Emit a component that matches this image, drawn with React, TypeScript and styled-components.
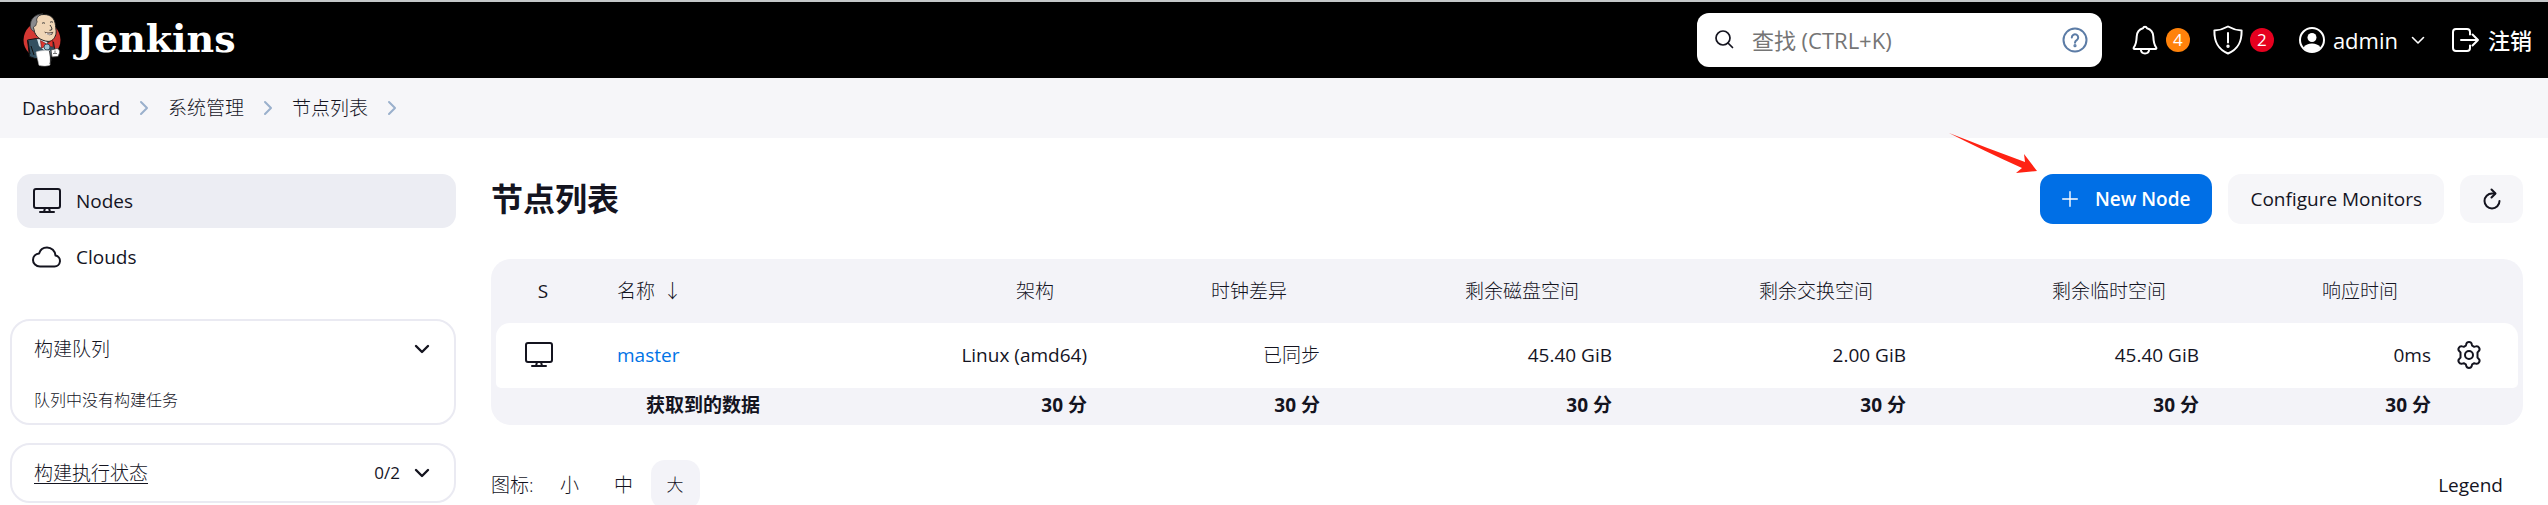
import React from "react";
import styled, { createGlobalStyle } from "styled-components";

const Global = createGlobalStyle`
  *, *::before, *::after { box-sizing: border-box; }
  body {
    margin: 0;
    background: #fff;
    color: #14141f;
    font-family: "Open Sans", "Noto Sans CJK SC", sans-serif;
    font-size: 19px;
    line-height: 28px;
  }
  a { color: inherit; text-decoration: none; }
  button { font: inherit; color: inherit; border: 0; background: none; padding: 0; cursor: pointer; }
  svg { display: block; flex: none; }
`;

/* ---------- icons ---------- */

const Line = styled.svg.attrs({ fill: "none", "aria-hidden": true })<{ $color?: string }>`
  stroke: ${p => p.$color ?? "currentColor"};
  stroke-linecap: round;
  stroke-linejoin: round;
`;

const MonitorIcon = () => (
  <Line width="30" height="30" viewBox="0 0 30 30" strokeWidth="2">
    <rect x="2" y="3" width="26" height="19" rx="2" />
    <path d="M13 22l-1 4M17 22l1 4M8 26h14" />
  </Line>
);

const CloudIcon = () => (
  <Line width="30" height="30" viewBox="0 0 30 30" strokeWidth="2">
    <path d="M8 24.500h14.500a5.500 5.500 0 0 0 1-10.900C23.200 8.800 19.500 5.500 15 5.500c-3.900 0-6.900 2.400-7.900 5.900C3.700 11.800 1 14.500 1 17.900 1 21.600 4 24.500 8 24.500z" />
  </Line>
);

const CrumbChevron = () => (
  <Line width="10" height="16" viewBox="0 0 10 16" strokeWidth="2" $color="#9ab0cc">
    <path d="M2 2l6 6-6 6" />
  </Line>
);

const ChevronDown = ({ thin }: { thin?: boolean }) => (
  <Line width="16" height="16" viewBox="0 0 16 16" strokeWidth={thin ? 1.6 : 2.4}>
    {thin ? <path d="M2.500 5.500L8 11l5.500-5.500" /> : <path d="M2 5l6 6 6-6" />}
  </Line>
);

const SearchIcon = () => (
  <Line width="20" height="20" viewBox="0 0 20 20" strokeWidth="1.700">
    <circle cx="9" cy="8" r="7" />
    <path d="M14 13l4.500 4.500" />
  </Line>
);

const HelpIcon = () => (
  <Line width="26" height="26" viewBox="0 0 26 26" strokeWidth="2" $color="#5c7ca6">
    <circle cx="13" cy="13" r="11.500" />
    <path d="M9.800 10.600a3.200 3.200 0 1 1 5 2.600c-1.200.8-1.800 1.300-1.800 2.500" />
    <circle cx="13" cy="18.700" r=".6" fill="#5c7ca6" />
  </Line>
);

const BellIcon = () => (
  <Line width="26" height="30" viewBox="0 0 26 30" strokeWidth="2">
    <path d="M2.500 24c-.8 0-1.200-.8-.7-1.500C4 19.500 4.500 17 4.700 11.500 5 6.500 8.300 4 11 3.300c.3-1 1-1.600 2-1.600s1.700.6 2 1.600c2.700.7 6 3.200 6.300 8.200.2 5.500.7 8 2.900 11 .5.700.1 1.500-.7 1.500z" />
    <path d="M8.800 24.500c.3 2.500 2 4 4.200 4s3.900-1.500 4.200-4" />
  </Line>
);

const ShieldIcon = () => (
  <Line width="30" height="30" viewBox="0 0 30 30" strokeWidth="2">
    <path d="M15 1.500C19.500 4 24 5.300 28.600 5.600 28.800 16 26 24 15 28.500 4 24 1.200 16 1.400 5.600 6 5.300 10.500 4 15 1.500z" />
    <path d="M15 8v9.500" />
    <circle cx="15" cy="21.300" r=".7" fill="currentColor" />
  </Line>
);

const UserIcon = () => (
  <svg width="26" height="26" viewBox="0 0 26 26" aria-hidden="true">
    <circle cx="13" cy="13" r="12" fill="none" stroke="#fff" strokeWidth="2" />
    <circle cx="13" cy="10.500" r="4.500" fill="#fff" />
    <path d="M4.500 20.500c2-3 5-4 8.500-4s6.500 1 8.500 4A12 12 0 0 1 13 25a12 12 0 0 1-8.500-4.500z" fill="#fff" />
  </svg>
);

const LogoutIcon = () => (
  <Line width="28" height="24" viewBox="0 0 28 24" strokeWidth="2">
    <path d="M18 6.500V4a3 3 0 0 0-3-3H4a3 3 0 0 0-3 3v16a3 3 0 0 0 3 3h11a3 3 0 0 0 3-3v-2.500" />
    <path d="M9 12h17M20.500 6.500L26 12l-5.500 5.500" />
  </Line>
);

const PlusIcon = () => (
  <Line width="16" height="16" viewBox="0 0 16 16" strokeWidth="1.400">
    <path d="M8 .7v14.600M.7 8h14.600" />
  </Line>
);

const RefreshIcon = () => (
  <Line width="20" height="22" viewBox="0 0 20 22" strokeWidth="2">
    <path d="M13 5.500h-3A7.500 7.500 0 1 0 17.500 13" />
    <path d="M9.500 1.500l4 4-4 4" />
  </Line>
);

const GearIcon = () => (
  <Line width="28" height="28" viewBox="0 0 28 28" strokeWidth="2">
    <path d="M11.200 3.200C11.500 1.900 12.500 1 14 1s2.500.9 2.800 2.200l.4 1.500 2 1.100 1.500-.4c1.300-.4 2.700.1 3.400 1.300s.5 2.700-.5 3.600L22.500 11.400v5.200l1.100 1.100c1 .9 1.200 2.400.5 3.600s-2.100 1.700-3.400 1.300l-1.500-.4-2 1.100-.4 1.500C16.500 26.100 15.500 27 14 27s-2.500-.9-2.800-2.200l-.4-1.500-2-1.100-1.500.4c-1.300.4-2.700-.1-3.400-1.300s-.5-2.700.5-3.600l1.100-1.100v-5.200l-1.100-1.100c-1-.9-1.200-2.400-.5-3.600s2.100-1.700 3.400-1.300l1.500.4 2-1.100z" />
    <circle cx="14" cy="14" r="4" />
  </Line>
);

const ButlerLogo = () => (
  <svg width="40" height="56" viewBox="0 0 40 56" aria-hidden="true">
    <circle cx="20" cy="28" r="18.500" fill="#d33833" />
    <path d="M5.500 28l9-1.500 17 3.500 1 7-4 9.500H13l-5.500-2z" fill="#335061" stroke="#111" strokeWidth="1" />
    <path d="M9 34l3 9M6 29l2 13" stroke="#111" fill="none" />
    <path d="M15 27l9 1 4 8-5 3-6-5z" fill="#dce8ee" />
    <path d="M11 15C11 6 15 2.500 22 2.500c7 0 11 4 11.500 11 .5 5 1.500 8-1 12-2 3.500-5 4.500-9 3.500-7-1.500-11-6-12.500-14z" fill="#f0d6b7" stroke="#222" strokeWidth="1" />
    <path d="M8.500 12C9 6 14 2 21 1.800 17 3 15 5 14.500 8c1.500 2-.5 3-.5 5 0 1.500-2 .5-2.500 2.500l1 4c-3.500-1-4.500-4-4-7.500z" fill="#8a8a8e" stroke="#333" strokeWidth=".8" />
    <path d="M20 11.500c1-1 2-1 3 0M28 10.500c1-1 2-1 3 0M28 13c1.500 2.500 2.500 3.500 1.500 5l-2 .3" stroke="#333" fill="none" />
    <path d="M22 19.500c2.500 1.300 5 1.500 9.500.3l-1.500 3c-3 .9-5 .3-8-3.300z" fill="#5b4a42" />
    <path d="M24 21.500c2 .8 3.500.8 5.500.1" stroke="#fff" fill="none" />
    <path d="M18.500 28.500l6 3.500 6-4 .5 7-6-1.500-5.500 2.500z" fill="#e0342f" stroke="#7c1714" strokeWidth=".7" />
    <circle cx="25" cy="35" r="3" fill="#9dc2d3" stroke="#335061" />
    <path d="M29 38l6-1.500c2 .5 3 2 2.500 4.500L36 44.500l-6 .5z" fill="#fff" stroke="#444" strokeWidth=".8" />
    <path d="M31 41.500h4M33 38.500v3" stroke="#777" />
    <path d="M14 40c4-1.500 9-1.800 14-1.200V53c-3 1.300-8 1.300-11 .3z" fill="#fff" stroke="#bbb" strokeWidth=".6" />
    <path d="M27.500 39l1.500 9-1 4" stroke="#333" fill="none" />
  </svg>
);

/* ---------- top bar ---------- */

const TopBar = styled.header`
  display: flex;
  align-items: center;
  height: 78px;
  padding: 0 16px 0 22px;
  background: #000;
  color: #fff;
  border-top: 2px solid #c4c7c9;
`;

const Brand = styled.a`
  display: flex;
  align-items: center;
  gap: 14px;
  margin-right: auto;
  font-family: "DejaVu Serif", serif;
  font-weight: 700;
  font-size: 38px;
  line-height: 40px;
  span { margin-bottom: 3px; }
`;

const SearchBox = styled.label`
  display: flex;
  align-items: center;
  width: 405px;
  height: 54px;
  padding: 0 14px 0 17px;
  border-radius: 12px;
  background: #fff;
  color: #14141f;
`;

const SearchInput = styled.input`
  flex: 1;
  min-width: 0;
  margin-left: 18px;
  padding: 0;
  border: 0;
  outline: 0;
  background: none;
  font: inherit;
  font-size: 22px;
  &::placeholder { color: #757575; opacity: 1; }
`;

const TopLink = styled.a<{ $left: number; $gap?: number }>`
  display: flex;
  align-items: center;
  gap: ${p => p.$gap ?? 8}px;
  margin-left: ${p => p.$left}px;
  font-size: 22px;
  font-weight: 500;
  white-space: nowrap;
`;

const Badge = styled.span<{ $color: string }>`
  width: 24px;
  height: 24px;
  border-radius: 12px;
  background: ${p => p.$color};
  font-size: 17px;
  line-height: 24px;
  font-weight: 500;
  text-align: center;
`;

const MenuToggle = styled.button`
  margin-left: 12px;
`;

/* ---------- breadcrumbs ---------- */

const Crumbs = styled.nav`
  display: flex;
  align-items: center;
  gap: 19px;
  height: 60px;
  padding: 0 22px;
  background: #f6f6f9;
`;

const Crumb = styled.a<{ $light?: boolean }>`
  font-weight: ${p => (p.$light ? 300 : 400)};
`;

/* ---------- page ---------- */

const Page = styled.div`
  display: grid;
  grid-template-columns: 446px minmax(0, 1fr);
  column-gap: 35px;
  padding: 36px 25px 0 10px;
`;

const Tasks = styled.nav`
  display: flex;
  flex-direction: column;
  gap: 2px;
  margin: 0 0 35px 7px;
`;

const Task = styled.a<{ $active?: boolean }>`
  display: flex;
  align-items: center;
  gap: 14px;
  height: 54px;
  padding: 0 15px;
  border-radius: 14px;
  background: ${p => (p.$active ? "#ecedf3" : "transparent")};
`;

const Pane = styled.section`
  margin-bottom: 18px;
  padding: 14px 22px;
  border: 2px solid #eaeaf2;
  border-radius: 20px;
`;

const PaneHead = styled.div`
  display: flex;
  align-items: center;
  gap: 14px;
`;

const PaneTitle = styled.h2<{ $linked?: boolean }>`
  flex: 1;
  margin: 0;
  font-size: 19px;
  font-weight: 300;
  text-decoration: ${p => (p.$linked ? "underline" : "none")};
  text-underline-offset: 3px;
`;

const PaneCount = styled.span`
  font-size: 17px;
`;

const PaneToggle = styled.button`
  margin-right: 2px;
`;

const PaneText = styled.p`
  margin: 28px 0 0;
  font-size: 16px;
  line-height: 18px;
  font-weight: 300;
`;

const AppBar = styled.div`
  display: flex;
  align-items: center;
  gap: 16px;
  height: 50px;
`;

const Title = styled.h1`
  flex: 1;
  margin: 0;
  font-size: 32px;
  line-height: 40px;
  font-weight: 700;
`;

const Button = styled.a<{ $primary?: boolean }>`
  position: relative;
  display: flex;
  align-items: center;
  gap: 17px;
  height: 50px;
  padding: 0 22px;
  border-radius: 13px;
  background: ${p => (p.$primary ? "#006fe6" : "#f6f6f9")};
  color: ${p => (p.$primary ? "#fff" : "inherit")};
  font-weight: ${p => (p.$primary ? 600 : 500)};
  white-space: nowrap;
`;

const IconButton = styled.button`
  display: flex;
  align-items: center;
  justify-content: center;
  width: 63px;
  height: 48px;
  border-radius: 13px;
  background: #f6f6f9;
`;

const Pointer = styled.svg`
  position: absolute;
  right: 100%;
  bottom: 100%;
  margin-right: 2px;
`;

const TableFrame = styled.div`
  margin-top: 35px;
  padding: 5px;
  border-radius: 20px;
  background: #f3f3f8;
`;

const NodeTable = styled.table`
  width: 100%;
  table-layout: fixed;
  border-collapse: separate;
  border-spacing: 0;
`;

const HeadCell = styled.th<{ $kind?: "status" | "name" }>`
  height: 59px;
  padding: ${p => (p.$kind === "status" ? "0 27px 5px 16px" : p.$kind ? "0 16px 5px" : "0 49px 5px 16px")};
  font-weight: ${p => (p.$kind === "status" ? 400 : 300)};
  text-align: ${p => (p.$kind === "status" ? "center" : p.$kind ? "left" : "right")};
`;

const SortLink = styled.a`
  margin-right: 8px;
`;

const Cell = styled.td<{ $left?: boolean; $light?: boolean }>`
  height: 65px;
  padding: 0 16px 2px;
  background: #fff;
  font-weight: ${p => (p.$light ? 300 : 400)};
  text-align: ${p => (p.$left ? "left" : "right")};
  &:first-child { padding-left: 28px; border-radius: 14px 0 0 5px; }
  &:last-child { padding-left: 8px; border-radius: 0 14px 5px 0; }
`;

const NodeLink = styled.a`
  color: #0073e6;
  font-weight: 500;
`;

const FootCell = styled.th<{ $center?: boolean }>`
  height: 32px;
  padding: 2px 16px 0;
  line-height: 30px;
  font-weight: 700;
  text-align: ${p => (p.$center ? "center" : "right")};
`;

const Bottom = styled.div`
  display: flex;
  align-items: center;
  height: 49px;
  margin-top: 35px;
  padding-right: 20px;
`;

const SizeLabel = styled.span`
  margin-right: 9px;
  font-weight: 300;
`;

const SizeButton = styled.button<{ $active?: boolean }>`
  width: ${p => (p.$active ? 49 : 54)}px;
  height: 49px;
  border-radius: 14px;
  background: ${p => (p.$active ? "#f3f3f8" : "transparent")};
  font-size: ${p => (p.$active ? 17 : 19)}px;
  font-weight: 300;
`;

const LegendButton = styled.button`
  margin-left: auto;
`;

const columns = [105, 204, 298, 233, 292, 294, 293, 232, 71];
const monitors = ["架构", "时钟差异", "剩余磁盘空间", "剩余交换空间", "剩余临时空间", "响应时间"];
const values = ["Linux (amd64)", "已同步", "45.40 GiB", "2.00 GiB", "45.40 GiB", "0ms"];

export default function App() {
  return (
    <>
      <Global />
      <TopBar>
        <Brand href="#">
          <ButlerLogo />
          <span>Jenkins</span>
        </Brand>
        <SearchBox>
          <SearchIcon />
          <SearchInput type="search" placeholder="查找 (CTRL+K)" aria-label="查找" />
          <HelpIcon />
        </SearchBox>
        <TopLink href="#" $left={30}>
          <BellIcon />
          <Badge $color="#ff820a">4</Badge>
        </TopLink>
        <TopLink href="#" $left={23} $gap={7}>
          <ShieldIcon />
          <Badge $color="#e6001f">2</Badge>
        </TopLink>
        <TopLink href="#" $left={25}>
          <UserIcon />
          admin
        </TopLink>
        <MenuToggle aria-label="admin">
          <ChevronDown thin />
        </MenuToggle>
        <TopLink href="#" $left={26}>
          <LogoutIcon />
          注销
        </TopLink>
      </TopBar>

      <Crumbs>
        <Crumb href="#">Dashboard</Crumb>
        <CrumbChevron />
        <Crumb href="#" $light>系统管理</Crumb>
        <CrumbChevron />
        <Crumb href="#" $light>节点列表</Crumb>
        <CrumbChevron />
      </Crumbs>

      <Page>
        <aside>
          <Tasks>
            <Task href="#" $active>
              <MonitorIcon />
              Nodes
            </Task>
            <Task href="#">
              <CloudIcon />
              Clouds
            </Task>
          </Tasks>
          <Pane>
            <PaneHead>
              <PaneTitle>构建队列</PaneTitle>
              <PaneToggle aria-label="构建队列">
                <ChevronDown />
              </PaneToggle>
            </PaneHead>
            <PaneText>队列中没有构建任务</PaneText>
          </Pane>
          <Pane>
            <PaneHead>
              <PaneTitle $linked>
                <a href="#">构建执行状态</a>
              </PaneTitle>
              <PaneCount>0/2</PaneCount>
              <PaneToggle aria-label="构建执行状态">
                <ChevronDown />
              </PaneToggle>
            </PaneHead>
          </Pane>
        </aside>

        <main>
          <AppBar>
            <Title>节点列表</Title>
            <Button href="#" $primary>
              <Pointer width="90" height="42" viewBox="0 0 90 42" aria-hidden="true">
                <path d="M1 1C27 11 52 21 77 30L76 22 89 39 68 41 74 36C48 24 24 13 1 1z" fill="#ff2213" />
              </Pointer>
              <PlusIcon />
              New Node
            </Button>
            <Button href="#">Configure Monitors</Button>
            <IconButton aria-label="Refresh">
              <RefreshIcon />
            </IconButton>
          </AppBar>

          <TableFrame>
            <NodeTable>
              <colgroup>
                {columns.map((w, i) => (
                  <col key={i} width={w} />
                ))}
              </colgroup>
              <thead>
                <tr>
                  <HeadCell $kind="status">S</HeadCell>
                  <HeadCell $kind="name">
                    <SortLink href="#">名称</SortLink>↓
                  </HeadCell>
                  {monitors.map(m => (
                    <HeadCell key={m}>
                      <a href="#">{m}</a>
                    </HeadCell>
                  ))}
                  <HeadCell />
                </tr>
              </thead>
              <tbody>
                <tr>
                  <Cell $left>
                    <MonitorIcon />
                  </Cell>
                  <Cell $left>
                    <NodeLink href="#">master</NodeLink>
                  </Cell>
                  {values.map((v, i) => (
                    <Cell key={i} $light={v === "已同步"}>{v}</Cell>
                  ))}
                  <Cell $left>
                    <a href="#" aria-label="master">
                      <GearIcon />
                    </a>
                  </Cell>
                </tr>
              </tbody>
              <tfoot>
                <tr>
                  <FootCell />
                  <FootCell $center>获取到的数据</FootCell>
                  {monitors.map(m => (
                    <FootCell key={m}>30 分</FootCell>
                  ))}
                  <FootCell />
                </tr>
              </tfoot>
            </NodeTable>
          </TableFrame>

          <Bottom>
            <SizeLabel>图标:</SizeLabel>
            <SizeButton>小</SizeButton>
            <SizeButton>中</SizeButton>
            <SizeButton $active>大</SizeButton>
            <LegendButton>Legend</LegendButton>
          </Bottom>
        </main>
      </Page>
    </>
  );
}
